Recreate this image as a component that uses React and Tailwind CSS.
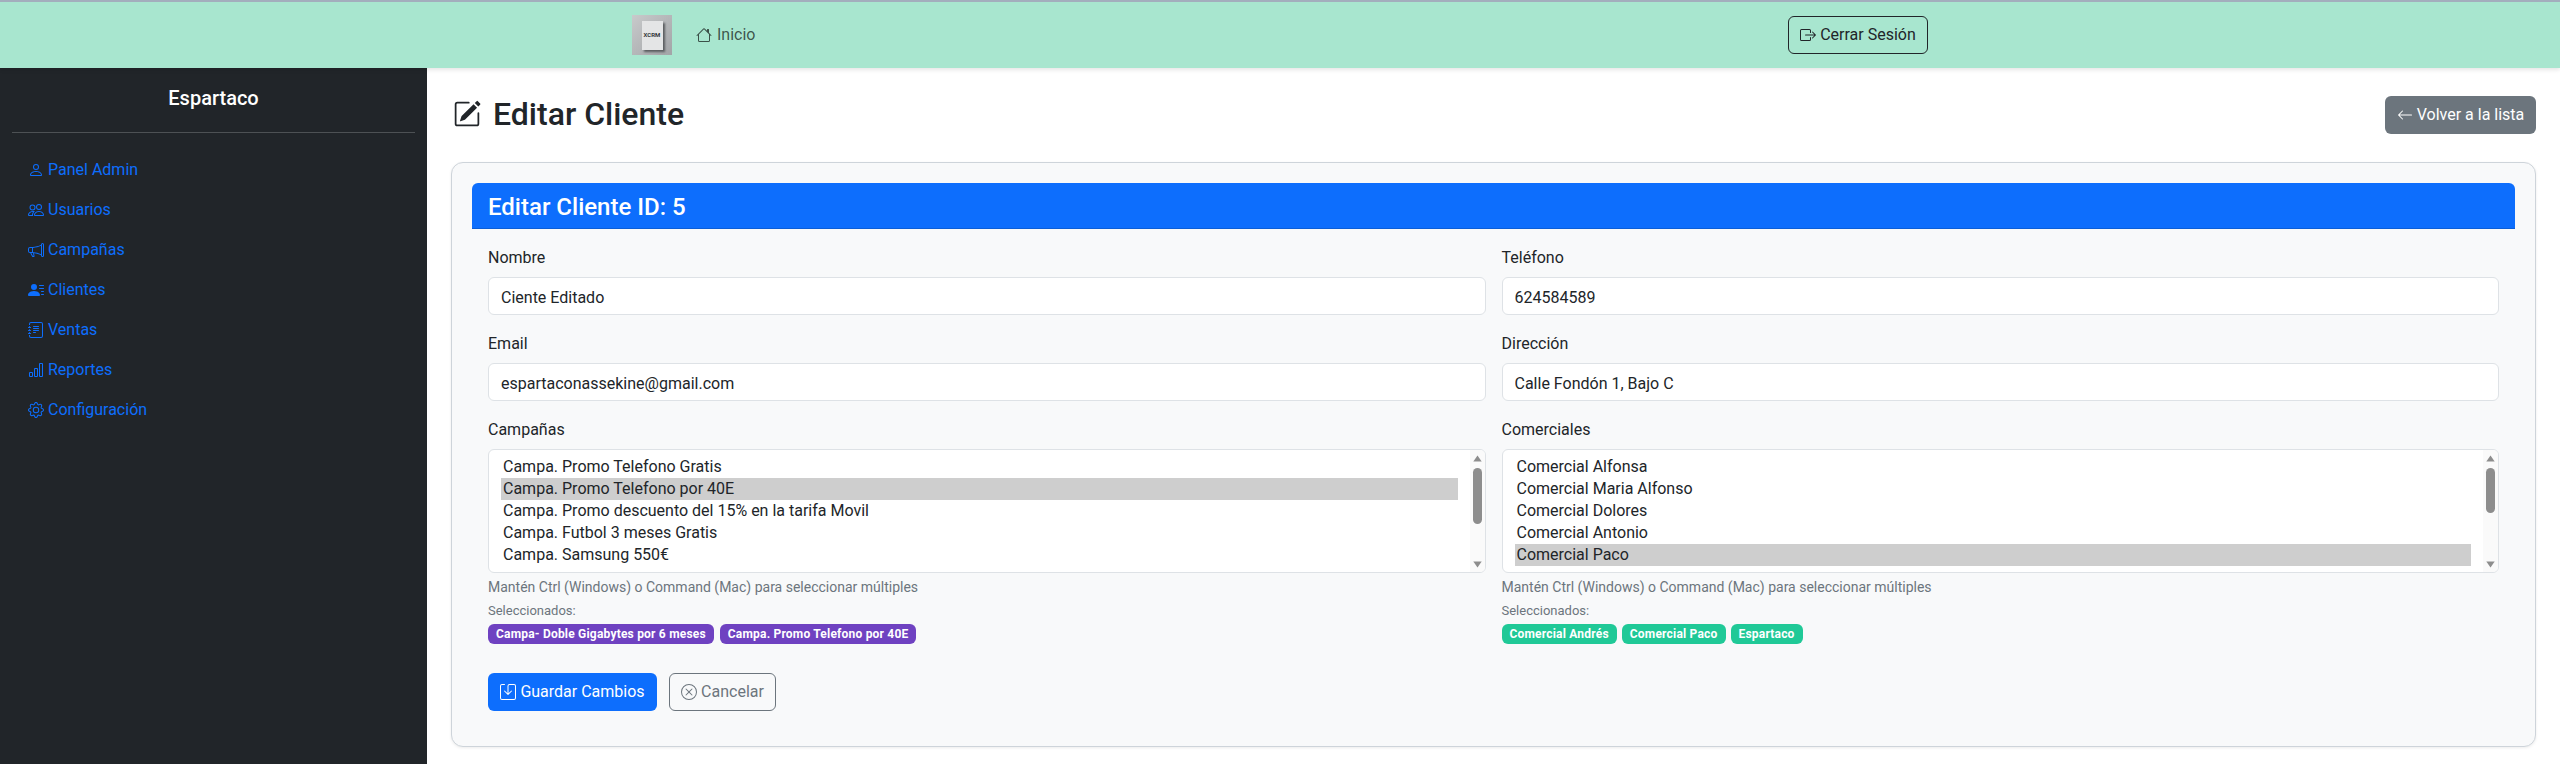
import React from 'react';
import {
  BsArrowLeft,
  BsBarChart,
  BsBoxArrowRight,
  BsGear,
  BsHouse,
  BsJournalText,
  BsMegaphone,
  BsPencilSquare,
  BsPeople,
  BsPerson,
  BsPersonLinesFill,
  BsSave,
  BsXCircle,
} from 'react-icons/bs';

const navItems = [
  { label: 'Panel Admin', icon: BsPerson },
  { label: 'Usuarios', icon: BsPeople },
  { label: 'Campañas', icon: BsMegaphone },
  { label: 'Clientes', icon: BsPersonLinesFill },
  { label: 'Ventas', icon: BsJournalText },
  { label: 'Reportes', icon: BsBarChart },
  { label: 'Configuración', icon: BsGear },
];

const campanas = [
  'Campa. Promo Telefono Gratis',
  'Campa. Promo Telefono por 40E',
  'Campa. Promo descuento del 15% en la tarifa Movil',
  'Campa. Futbol 3 meses Gratis',
  'Campa. Samsung 550€',
];

const comerciales = [
  'Comercial Alfonsa',
  'Comercial Maria Alfonso',
  'Comercial Dolores',
  'Comercial Antonio',
  'Comercial Paco',
];

const Logo = () => (
  <div className="w-10 h-10 flex items-center justify-center bg-gradient-to-br from-[#c8cacb] to-[#a2a4a7]">
    <div className="w-[21px] h-[29px] bg-[#e4e5e6] shadow-[2px_2px_2px_#5a5d60] flex items-center justify-center">
      <span className="text-[6px] leading-none font-bold text-[#33363a]">XCRM</span>
    </div>
  </div>
);

const Field = ({ label, value }) => (
  <div>
    <label className="block pt-px mb-[7px] text-[#212529]">{label}</label>
    <input
      defaultValue={value}
      className="block w-full h-[38px] px-3 pt-0.5 bg-white border border-[#dee2e6] rounded-md text-[#212529] outline-none"
    />
  </div>
);

const MultiField = ({ label, options, selected, badges, badgeClass, badgeGap, thumbClass }) => (
  <div>
    <label className="block pt-px mb-[7px] text-[#212529]">{label}</label>
    <div className="relative h-[124px] py-1.5 pl-3 pr-[27px] overflow-hidden bg-white border border-[#dee2e6] rounded-md text-[#212529]">
      {options.map((o) => (
        <div
          key={o}
          className={`h-[22px] px-0.5 leading-[22px] whitespace-nowrap ${selected.includes(o) ? 'bg-[#cecece]' : ''}`}
        >
          {o}
        </div>
      ))}
      <div className="absolute top-0 right-0 bottom-0 w-[15px] flex flex-col items-center pt-[5px] pb-1 bg-[#fafafa]">
        <svg width="9" height="7" viewBox="0 0 9 7" className="shrink-0">
          <path d="M4.5 0.5 L8.7 6.5 L0.3 6.5 Z" fill="#8d8d8d" />
        </svg>
        <div className={`w-[9px] mt-1.5 rounded-full bg-[#8d8d8d] ${thumbClass}`} />
        <svg width="9" height="7" viewBox="0 0 9 7" className="shrink-0 mt-auto">
          <path d="M4.5 6.5 L8.7 0.5 L0.3 0.5 Z" fill="#8d8d8d" />
        </svg>
      </div>
    </div>
    <div className="mt-1 text-sm leading-[21px] text-[#6c757d]">
      Mantén Ctrl (Windows) o Command (Mac) para seleccionar múltiples
    </div>
    <div className="mt-1 text-[13px] leading-[18px] text-[#6c757d]">Seleccionados:</div>
    <div className={`mt-1 flex ${badgeGap}`}>
      {badges.map((b) => (
        <span key={b} className={`h-5 px-2 rounded-md text-xs leading-5 font-bold tracking-[0.2px] text-white ${badgeClass}`}>
          {b}
        </span>
      ))}
    </div>
  </div>
);

const App = () => {
  return (
    <div className="h-screen flex flex-col overflow-hidden bg-white text-base font-[Roboto,sans-serif]">
      {/* Navbar */}
      <nav className="relative z-10 h-[68px] shrink-0 border-t-2 border-[#a3aebd] bg-[#a8e6cf] shadow-[0_2px_4px_rgba(0,0,0,0.1)]">
        <div className="mx-auto w-[1320px] h-full px-3 flex items-center justify-between">
          <div className="flex items-center">
            <Logo />
            <a className="ml-6 flex items-center gap-[5px] text-black/65">
              <BsHouse className="w-4 h-4" />
              Inicio
            </a>
          </div>
          <button className="w-[140px] h-[38px] flex items-center justify-center gap-1 border border-[#212529] rounded-md text-[#212529]">
            <BsBoxArrowRight className="w-4 h-4" />
            Cerrar Sesión
          </button>
        </div>
      </nav>

      <div className="flex flex-1 min-h-0">
        {/* Sidebar */}
        <aside className="w-[427px] shrink-0 px-3 pt-[18px] bg-[#212529]">
          <h5 className="text-center text-xl leading-6 font-medium text-white">Espartaco</h5>
          <hr className="mt-[22px] mb-[17px] border-[#4d5154]" />
          <ul>
            {navItems.map((item) => {
              const Icon = item.icon;
              return (
                <li key={item.label} className="h-10 px-4 flex items-center gap-1 text-[#0d6efd]">
                  <Icon className="w-4 h-4" />
                  {item.label}
                </li>
              );
            })}
          </ul>
        </aside>

        {/* Content */}
        <main className="flex-1 px-6 pt-7">
          <div className="flex items-center justify-between mb-7">
            <h2 className="h-[38px] pb-0.5 pl-0.5 flex items-center gap-3 text-[32px] leading-[36px] font-medium text-[#212529]">
              <BsPencilSquare className="w-7 h-7" />
              Editar Cliente
            </h2>
            <button className="w-[151px] h-[38px] flex items-center justify-center gap-1 rounded-md bg-[#6c757d] text-white">
              <BsArrowLeft className="w-4 h-4" />
              Volver a la lista
            </button>
          </div>

          <div className="h-[585px] p-5 bg-[#f8f9fa] border border-[#ced4da] rounded-xl shadow-[0_1px_3px_rgba(0,0,0,0.08)]">
            <div className="h-[46px] px-4 pt-0.5 flex items-center bg-[#0d6efd] border-b border-[#0b5ed7] rounded-t-md text-2xl font-medium text-white">
              Editar Cliente ID: 5
            </div>
            <div className="px-4 pt-4">
              <div className="grid grid-cols-2 gap-x-4 gap-y-4">
                <Field label="Nombre" value="Ciente Editado" />
                <Field label="Teléfono" value="624584589" />
                <Field label="Email" value="espartaconassekine@gmail.com" />
                <Field label="Dirección" value="Calle Fondón 1, Bajo C" />
                <MultiField
                  label="Campañas"
                  options={campanas}
                  selected={['Campa. Promo Telefono por 40E']}
                  badges={['Campa- Doble Gigabytes por 6 meses', 'Campa. Promo Telefono por 40E']}
                  badgeClass="bg-[#6f42c1]"
                  badgeGap="gap-1.5"
                  thumbClass="h-14"
                />
                <MultiField
                  label="Comerciales"
                  options={comerciales}
                  selected={['Comercial Paco']}
                  badges={['Comercial Andrés', 'Comercial Paco', 'Espartaco']}
                  badgeClass="bg-[#20c997]"
                  badgeGap="gap-[5px]"
                  thumbClass="h-[45px]"
                />
              </div>
              <div className="mt-[29px] flex gap-3">
                <button className="w-[169px] h-[38px] flex items-center justify-center gap-1 rounded-md bg-[#0d6efd] text-white">
                  <BsSave className="w-4 h-4" />
                  Guardar Cambios
                </button>
                <button className="w-[107px] h-[38px] flex items-center justify-center gap-1 border border-[#6c757d] rounded-md text-[#6c757d]">
                  <BsXCircle className="w-4 h-4" />
                  Cancelar
                </button>
              </div>
            </div>
          </div>
        </main>
      </div>
    </div>
  );
};

export default App;
